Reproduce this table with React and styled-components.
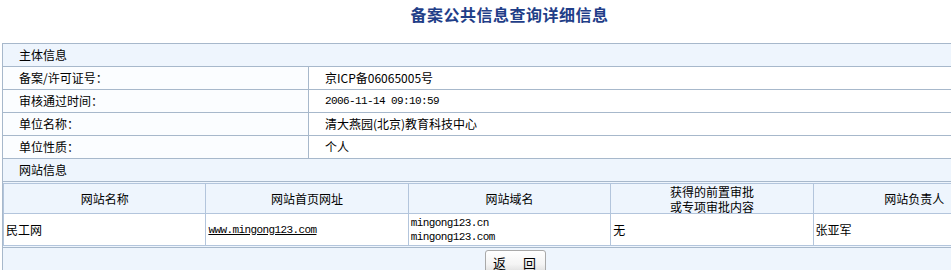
import { Fragment } from "react";
import styled, { createGlobalStyle } from "styled-components";

const GlobalStyle = createGlobalStyle`
  html, body {
    margin: 0;
    padding: 0;
    background: #ffffff;
  }
  body {
    font-family: "Noto Sans CJK SC", "Liberation Sans", sans-serif;
    font-size: 12px;
    color: #000000;
  }
`

// page is wider than the window, as in the original
const Page = styled.div`
  width: 1020px;
  padding: 0 3px 0 2px;
  box-sizing: border-box;
`

const Title = styled.h1`
  margin: 0;
  height: 43px;
  line-height: 29px;
  text-align: center;
  font-size: 16px;
  font-weight: 700;
  color: #1f3e88;
  letter-spacing: 0.5px;
`

const Frame = styled.div`
  display: grid;
  grid-template-columns: 305px 1fr;
  gap: 1px;
  padding: 1px;
  background: #a7b8cb;
`

const Section = styled.div`
  grid-column: 1 / -1;
  height: 22px;
  line-height: 22px;
  padding-left: 16px;
  background: #eef5fd;
`

const Label = styled.div`
  height: 22px;
  line-height: 22px;
  padding-left: 16px;
  background: #fbfdff;
`

const Value = styled.div`
  height: 22px;
  line-height: 22px;
  padding-left: 16px;
  background: #ffffff;
  font-family: ${(p) => (p.$mono ? '"Liberation Mono", "Noto Sans CJK SC", monospace' : "inherit")};
  font-size: ${(p) => (p.$mono ? "11px" : "12px")};
  letter-spacing: ${(p) => (p.$mono ? "-0.6px" : "0")};
`

const Wide = styled.div`
  grid-column: 1 / -1;
  background: #eef5fd;
  padding: 1px 0;
`

const Sites = styled.div`
  display: grid;
  grid-template-columns: repeat(5, 1fr);
  gap: 1px;
  padding: 1px;
  background: #b3c5dc;
`

const Head = styled.div`
  height: 29px;
  display: flex;
  flex-direction: column;
  align-items: center;
  justify-content: center;
  text-align: center;
  line-height: 15px;
  background: #eef5fd;
`

const Cell = styled.div`
  height: 31px;
  display: flex;
  flex-direction: column;
  justify-content: center;
  padding-left: 2px;
  background: #ffffff;
  font-family: ${(p) => (p.$mono ? '"Liberation Mono", monospace' : "inherit")};
  font-size: ${(p) => (p.$mono ? "11px" : "12px")};
  letter-spacing: ${(p) => (p.$mono ? "-0.6px" : "0")};
  line-height: ${(p) => (p.$mono ? "14px" : "16px")};
`

const SiteLink = styled.a`
  color: #000000;
  text-decoration: underline;
`

const Footer = styled.div`
  grid-column: 1 / -1;
  background: #eef5fd;
  height: 40px;
  display: flex;
  justify-content: center;
  padding-top: 2px;
  box-sizing: border-box;
`

const BackButton = styled.button`
  width: 61px;
  height: 24px;
  margin-left: 12px;
  border: 1px solid #a9a9a9;
  border-radius: 3px;
  background: linear-gradient(#ffffff, #f4f4f4 60%, #dcdcdc);
  font-family: "Noto Sans CJK SC", sans-serif;
  font-size: 13px;
  letter-spacing: 2px;
  color: #000000;
  padding: 0;
`

const rows = [
  ["备案/许可证号：", "京ICP备06065005号", false],
  ["审核通过时间：", "2006-11-14 09:10:59", true],
  ["单位名称：", "清大燕园(北京)教育科技中心", false],
  ["单位性质：", "个人", false],
];

export default function App() {
  return (
    <Page>
      <GlobalStyle />
      <Title>备案公共信息查询详细信息</Title>
      <Frame>
        <Section>主体信息</Section>
        {rows.map(([label, value, mono]) => (
          <Fragment key={label}>
            <Label>{label}</Label>
            <Value $mono={mono}>{value}</Value>
          </Fragment>
        ))}
        <Section>网站信息</Section>
        <Wide>
          <Sites>
            <Head>网站名称</Head>
            <Head>网站首页网址</Head>
            <Head>网站域名</Head>
            <Head><span>获得的前置审批</span><span>或专项审批内容</span></Head>
            <Head>网站负责人</Head>
            <Cell>民工网</Cell>
            <Cell $mono><span><SiteLink href="#">www.mingong123.com</SiteLink></span></Cell>
            <Cell $mono><span>mingong123.cn</span><span>mingong123.com</span></Cell>
            <Cell>无</Cell>
            <Cell>张亚军</Cell>
          </Sites>
        </Wide>
        <Footer>
          <BackButton>返　回</BackButton>
        </Footer>
      </Frame>
    </Page>
  );
}
